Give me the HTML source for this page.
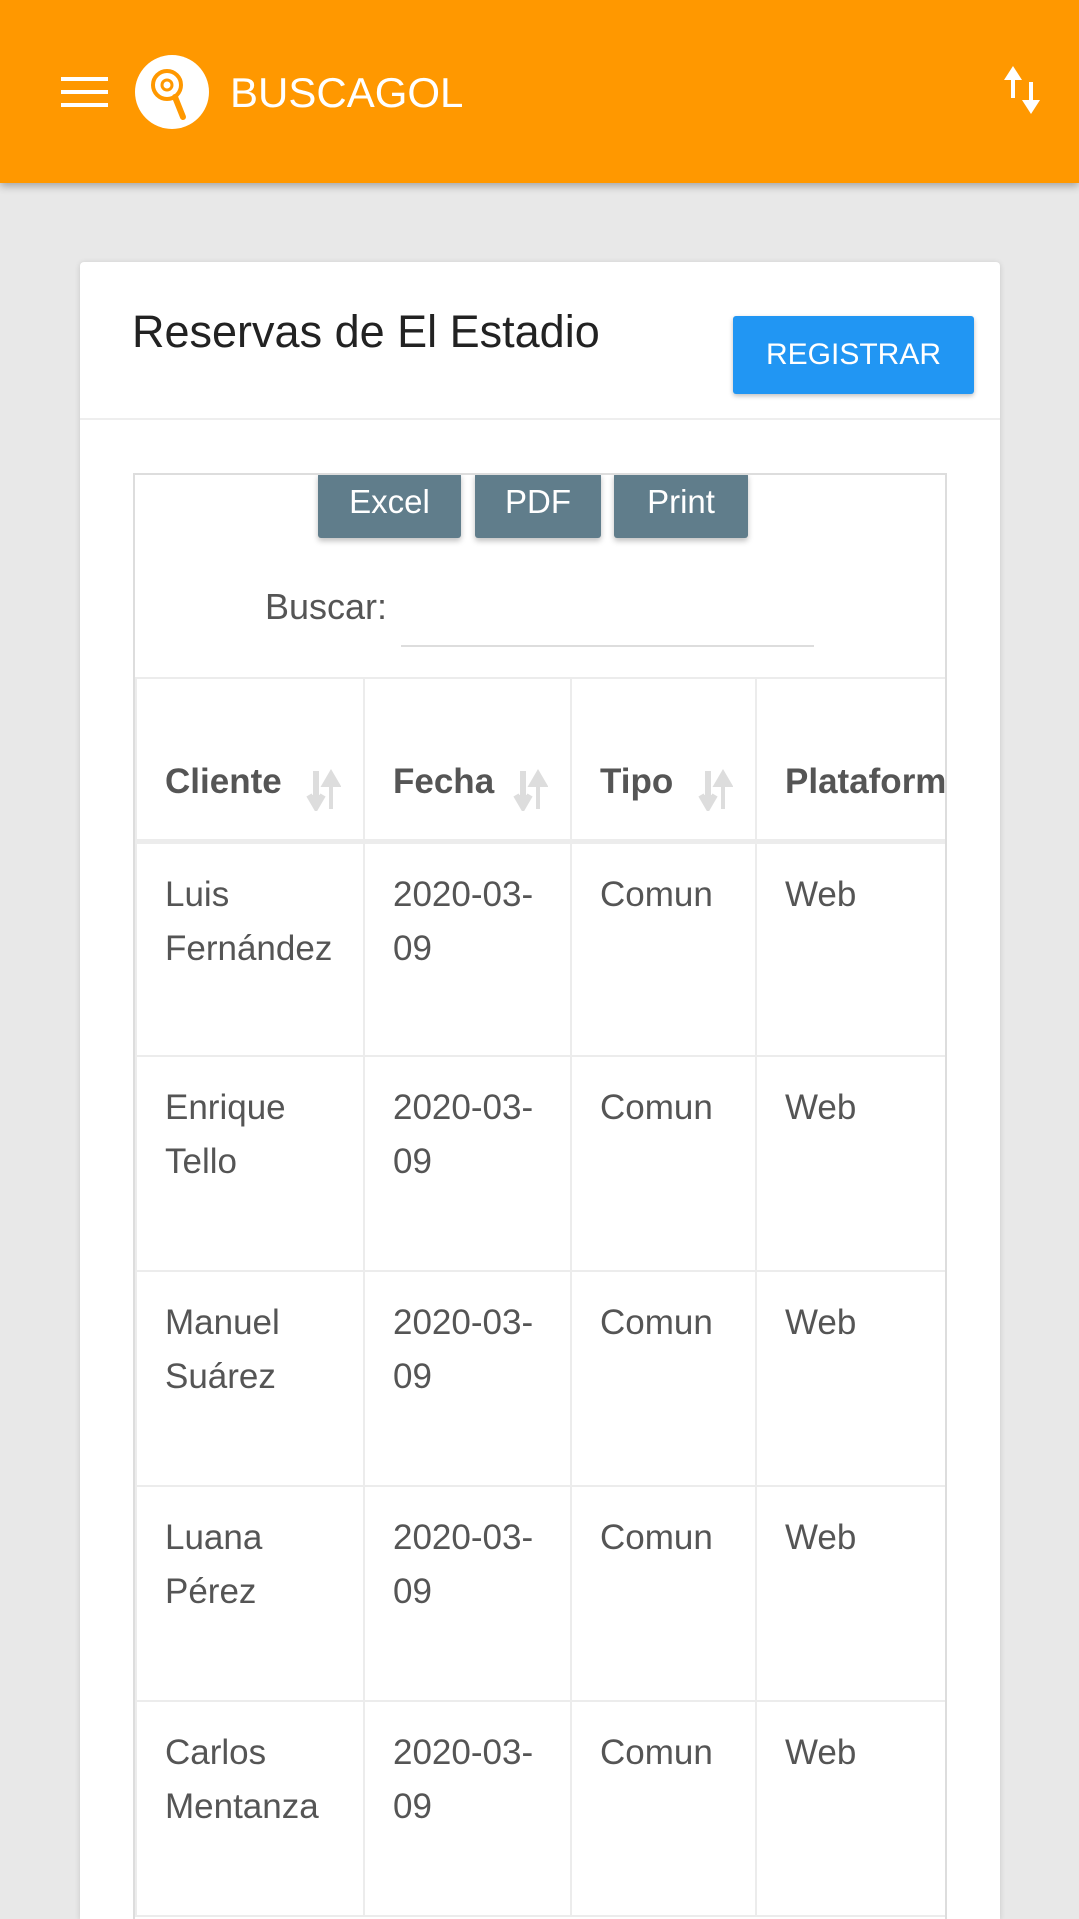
<!DOCTYPE html>
<html style="height:1919px;overflow:hidden"><head><meta charset="utf-8"><style>
*{box-sizing:border-box;margin:0;padding:0}
body{width:1079px;height:1919px;overflow:hidden;background:#e8e8e8;font-family:"Liberation Sans",sans-serif;position:relative}
.hdr{position:absolute;left:0;top:0;width:1079px;height:183px;background:#ff9800;box-shadow:0 3px 8px rgba(0,0,0,.3);z-index:2}
.card{position:absolute;left:80px;top:262px;width:920px;height:1657px;background:#fff;border-radius:4px 4px 0 0;box-shadow:0 1px 6px rgba(0,0,0,.15);overflow:hidden}
.btn{position:absolute;background:#607d8b;color:#fff;font-size:33px;text-align:center;border-radius:3px;box-shadow:0 3px 6px rgba(0,0,0,.25)}
table{position:absolute;border-collapse:collapse;table-layout:fixed;width:1050px}
td,th{border:2px solid #ececec;vertical-align:top;text-align:left;color:#555;font-size:35px;line-height:54px;padding:24px 0 0 28px}
th{height:163px;vertical-align:bottom;padding-bottom:30px;font-weight:bold;border-bottom:5px solid #ececec;white-space:nowrap;overflow:hidden;position:relative}
td{height:215px}
.s{position:absolute;right:22px;bottom:28px}
</style></head><body>
<div class="hdr">
 <div style="position:absolute;left:61px;top:77px;width:47px;height:4px;background:#fff"></div>
 <div style="position:absolute;left:61px;top:90px;width:47px;height:4px;background:#fff"></div>
 <div style="position:absolute;left:61px;top:103px;width:47px;height:4px;background:#fff"></div>
 <svg style="position:absolute;left:135px;top:55px" width="74" height="74" viewBox="0 0 74 74"><circle cx="37" cy="37" r="37" fill="#fff"/><circle cx="32" cy="30" r="14" fill="none" stroke="#ff9800" stroke-width="4"/><circle cx="32" cy="30" r="5" fill="none" stroke="#ff9800" stroke-width="3"/><path d="M40 42 L48 62" stroke="#ff9800" stroke-width="6" stroke-linecap="round"/></svg>
 <div style="position:absolute;left:230px;top:66px;color:#fff;font-size:42px;line-height:54px">BUSCAGOL</div>
 <svg style="position:absolute;left:1001px;top:64px" width="42" height="52" viewBox="0 0 42 52"><path d="M12 2 L3 16 H10 V34 H14 V16 H21 Z" fill="#fff"/><path d="M30 50 L21 36 H28 V18 H32 V36 H39 Z" fill="#fff"/></svg>
</div>
<div class="card">
 <div style="position:absolute;left:52px;top:44px;font-size:45px;color:#222">Reservas de El Estadio</div>
 <div style="position:absolute;left:653px;top:54px;width:241px;height:78px;background:#2196f3;color:#fff;font-size:30px;line-height:78px;text-align:center;border-radius:3px;box-shadow:0 2px 5px rgba(0,0,0,.25)">REGISTRAR</div>
 <div style="position:absolute;left:0;top:156px;width:920px;height:2px;background:#eee"></div>
 <div style="position:absolute;left:53px;top:211px;width:814px;height:1446px;border:2px solid #ddd;border-bottom:none;overflow:hidden">
  <div class="btn" style="left:183px;top:-2px;width:143px;height:65px;line-height:58px">Excel</div>
  <div class="btn" style="left:340px;top:-2px;width:126px;height:65px;line-height:58px">PDF</div>
  <div class="btn" style="left:479px;top:-2px;width:134px;height:65px;line-height:58px">Print</div>
  <div style="position:absolute;left:130px;top:110px;font-size:36px;color:#555;line-height:44px">Buscar:</div>
  <div style="position:absolute;left:266px;top:170px;width:413px;height:2px;background:#ddd"></div>
  <table style="left:0;top:202px">
   <colgroup><col style="width:228px"><col style="width:207px"><col style="width:185px"><col style="width:430px"></colgroup>
   <tr><th>Cliente<svg class="s" width="36" height="42" viewBox="0 0 36 42"><path d="M11 2V32M4 26L11 38L18 26" fill="#ddd" stroke="#ddd" stroke-width="6"/><path d="M26 40V10M19 16L26 4L33 16Z" fill="#ddd" stroke="#ddd" stroke-width="4"/></svg></th><th>Fecha<svg class="s" width="36" height="42" viewBox="0 0 36 42"><path d="M11 2V32M4 26L11 38L18 26" fill="#ddd" stroke="#ddd" stroke-width="6"/><path d="M26 40V10M19 16L26 4L33 16Z" fill="#ddd" stroke="#ddd" stroke-width="4"/></svg></th><th>Tipo<svg class="s" width="36" height="42" viewBox="0 0 36 42"><path d="M11 2V32M4 26L11 38L18 26" fill="#ddd" stroke="#ddd" stroke-width="6"/><path d="M26 40V10M19 16L26 4L33 16Z" fill="#ddd" stroke="#ddd" stroke-width="4"/></svg></th><th>Plataforma</th></tr>
   <tr><td>Luis<br>Fernández</td><td>2020-03-<br>09</td><td>Comun</td><td>Web</td></tr>
   <tr><td>Enrique<br>Tello</td><td>2020-03-<br>09</td><td>Comun</td><td>Web</td></tr>
   <tr><td>Manuel<br>Suárez</td><td>2020-03-<br>09</td><td>Comun</td><td>Web</td></tr>
   <tr><td>Luana<br>Pérez</td><td>2020-03-<br>09</td><td>Comun</td><td>Web</td></tr>
   <tr><td>Carlos<br>Mentanza</td><td>2020-03-<br>09</td><td>Comun</td><td>Web</td></tr>
  </table>
 </div>
</div>
</body></html>
